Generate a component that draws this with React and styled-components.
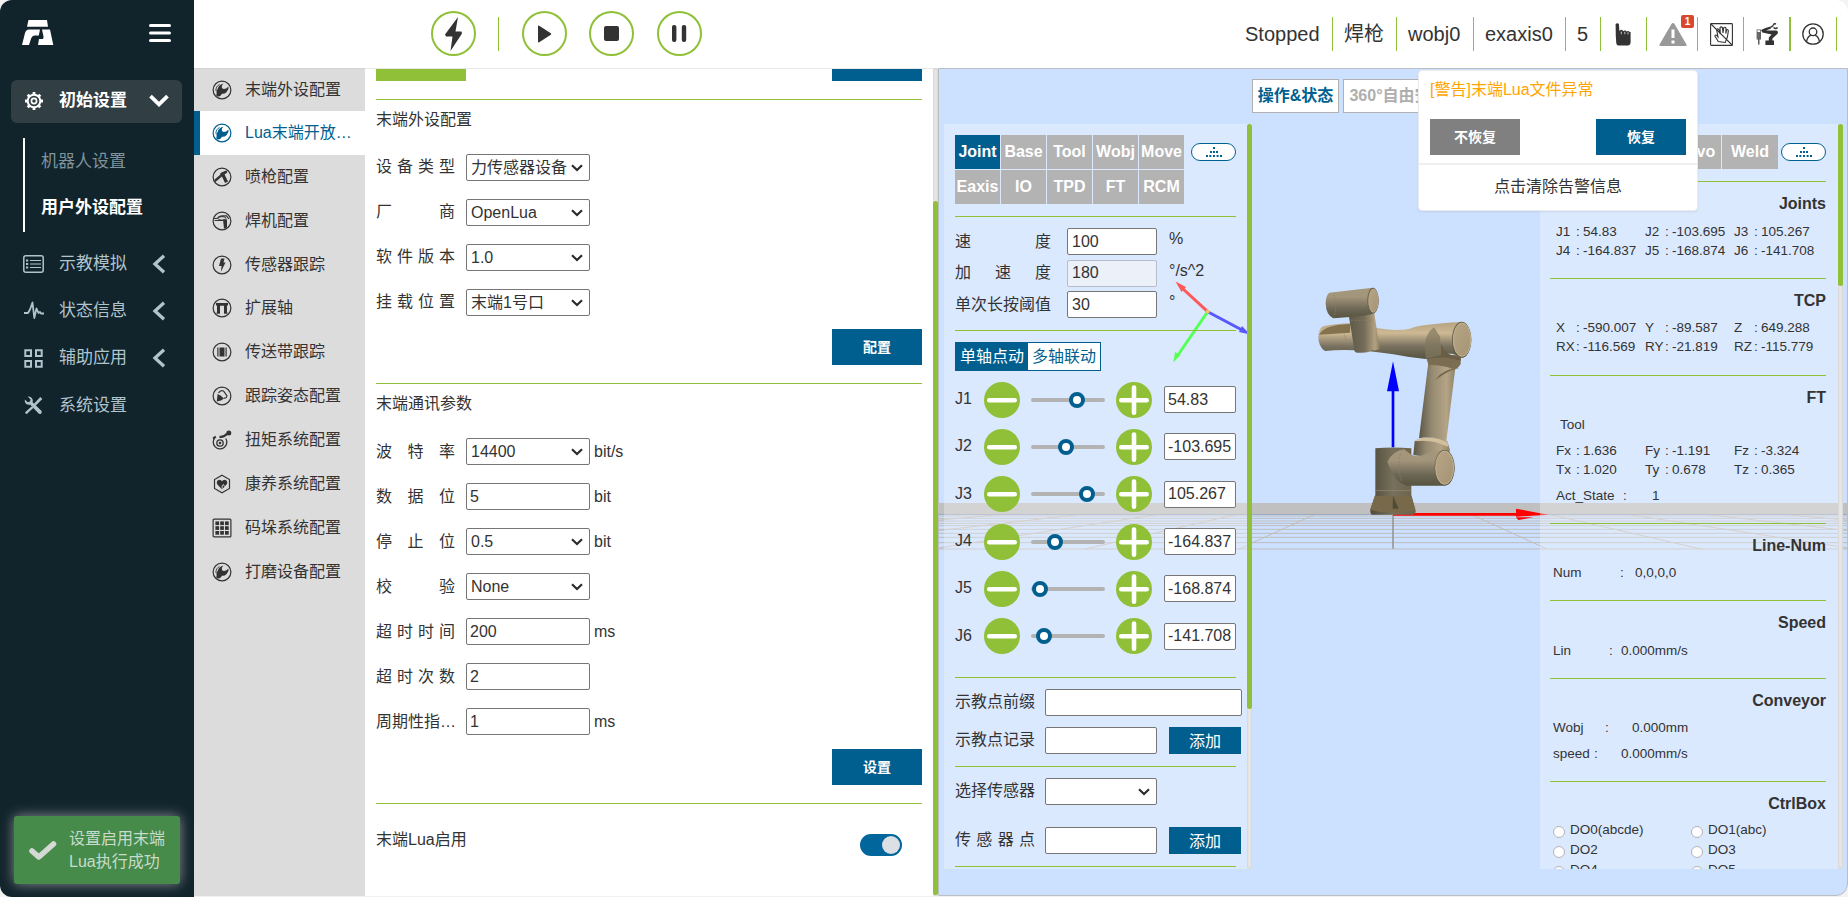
import React from 'react';
import styled, { createGlobalStyle, css } from 'styled-components';

const GREEN = '#8fc037';
const BLUE = '#005f8f';
const FONT = '"Liberation Sans", "Noto Sans CJK SC", sans-serif';

const Global = createGlobalStyle`
  *, *::before, *::after { box-sizing: border-box; }
  html, body { margin: 0; padding: 0; background: #f3f3f4; overflow: hidden; }
  body { font-family: ${FONT}; font-size: 16px; line-height: 24px; color: #333; }
  button, input, select { font-family: inherit; font-size: inherit; color: inherit; margin: 0; }
`;

const Shell = styled.div`
  display: flex;
  width: 1848px;
  height: 897px;
  background: #f0f0f2;
  border-radius: 12px;
  overflow: hidden;
`;

/* ---------- sidebar ---------- */
const Sidebar = styled.aside`
  position: relative;
  width: 194px;
  flex: none;
  background: #11232b;
  color: #b0c4cd;
`;
const Brand = styled.div`
  display: flex;
  justify-content: space-between;
  align-items: center;
  height: 80px;
  padding: 0 23px 14px 22px;
  svg { display: block; }
`;
const NavItem = styled.div`
  display: flex;
  align-items: center;
  height: ${(p) => (p.$active ? 43 : 47.3)}px;
  margin: 0 12px 0 11px;
  padding: 0 12px ${(p) => (p.$active ? 2 : 0)}px 12px;
  border-radius: 6px;
  font-size: 17px;
  ${(p) => p.$active && css`background: #313f45; color: #fff; font-weight: 700;`}
  svg { flex: none; display: block; }
`;
const NavIcon = styled.span`
  display: flex;
  width: 21px;
  justify-content: center;
  margin-right: 15px;
`;
const NavText = styled.span`flex: 1; white-space: nowrap;`;
const NavArrow = styled.span`width: 22px; display: flex; justify-content: center;`;
const SubNav = styled.div`
  margin: 15px 0 8px 23px;
  border-left: 2px solid #fff;
  height: 94px;
  padding: 1px 0 0 16px;
  font-size: 17px;
`;
const SubItem = styled.div`
  height: 46px;
  line-height: 46px;
  color: ${(p) => (p.$active ? '#fff' : '#7f939c')};
  font-weight: ${(p) => (p.$active ? 700 : 400)};
`;
const Toast = styled.div`
  position: absolute;
  left: 14px;
  bottom: 13px;
  width: 166px;
  height: 68px;
  border-radius: 3px;
  background: #468b4a;
  box-shadow: 0 0 13px #8b8f93;
  display: flex;
  align-items: center;
  color: #c9dbca;
  line-height: 23px;
  padding: 0 0 1px 14px;
  gap: 12px;
`;

/* ---------- frame ---------- */
const Body = styled.div`display: flex; flex-direction: column; flex: 1; min-width: 0;`;
const Header = styled.header`
  display: flex;
  justify-content: space-between;
  height: 68px;
  flex: none;
  background: #fff;
`;
const Controls = styled.div`display: flex; align-items: center; padding: 0 0 11px 237px; margin-top: 11px; height: 56px;`;
const RoundButton = styled.button`
  width: 45px;
  height: 45px;
  border-radius: 50%;
  border: 2px solid ${GREEN};
  background: #fff;
  padding: 0;
  display: flex;
  align-items: center;
  justify-content: center;
  margin-right: ${(p) => p.$gap || 0}px;
`;
const Split = styled.i`width: 1px; height: 34px; background: ${GREEN}; margin-right: 23px;`;
const Status = styled.div`display: flex; margin: 17px 11px 0 0; height: 34px; font-size: 20px; line-height: 34px;`;
const StatusItem = styled.div`
  position: relative;
  display: flex;
  align-items: center;
  padding-left: ${(p) => p.$pl || 12}px;
  white-space: nowrap;
  border-right: ${(p) => p.$bar || 1}px solid ${GREEN};
  width: ${(p) => p.$w}px;
  flex: none;
  svg { flex: none; }
`;
const Badge = styled.span`
  position: absolute;
  right: 3px;
  top: -2px;
  width: 13px;
  height: 13px;
  border-radius: 2px;
  background: #d9472f;
  color: #fff;
  font-size: 10px;
  font-weight: 700;
  line-height: 13px;
  text-align: center;
`;
const Main = styled.div`display: flex; flex: 1; min-height: 0; padding-bottom: 1px;`;

/* ---------- peripheral list ---------- */
const List = styled.nav`width: 171px; background: #dcdcdc; border-top: 1px solid #d2d2d2; flex: none;`;
const ListItem = styled.div`
  display: flex;
  align-items: center;
  height: 43.87px;
  &:first-child { height: 42px; }
  padding-left: ${(p) => (p.$active ? 12 : 18)}px;
  gap: 13px;
  white-space: nowrap;
  color: ${(p) => (p.$active ? BLUE : '#333')};
  background: ${(p) => (p.$active ? '#fff' : 'none')};
  border-left: ${(p) => (p.$active ? 6 : 0)}px solid ${BLUE};
  svg { display: block; flex: none; width: 20px; height: 20px; }
`;

/* ---------- configuration form ---------- */
const Form = styled.section`
  width: 568px;
  flex: none;
  padding: 0 11px;
  background: #fff;
  border-top: 1px solid #e8e8e8;
  overflow: hidden;
`;
const CutButtons = styled.div`display: flex; justify-content: space-between; height: 12px; margin-bottom: 18px;`;
const CutButton = styled.i`width: 90px; background: ${(p) => (p.$green ? GREEN : BLUE)};`;
const Rule = styled.div`
  height: 1px;
  background: ${GREEN};
  margin: ${(p) => p.$mt || 0}px 0 ${(p) => p.$mb || 0}px;
`;
const Title = styled.div`height: 24px; line-height: 24px; margin-bottom: ${(p) => p.$mb}px;`;
const Field = styled.div`
  display: flex;
  align-items: center;
  height: 27px;
  margin-bottom: ${(p) => p.$mb}px;
`;
const Label = styled.label`
  width: ${(p) => p.$w}px;
  margin-right: ${(p) => p.$mr}px;
  height: 24px;
  margin-top: ${(p) => (p.$up ? -2 : 0)}px;
  text-align: justify;
  text-align-last: ${(p) => (p.$plain ? 'left' : 'justify')};
  white-space: ${(p) => (p.$plain ? 'nowrap' : 'normal')};
  flex: none;
`;
const Box = styled.input`
  width: ${(p) => p.$w}px;
  height: 27px;
  border: 1px solid #767676;
  border-radius: 2px;
  background: #fff;
  padding: 0 ${(p) => p.$pad || 3}px;
  flex: none;
  outline: none;
  &:disabled { background: #ecf1f9; border-color: #b5bdca; }
`;
const SelectWrap = styled.span`
  position: relative;
  display: block;
  width: ${(p) => p.$w}px;
  height: 27px;
  flex: none;
  svg { position: absolute; right: 6px; top: 9px; }
`;
const SelectBox = styled.select`
  appearance: none;
  width: 100%;
  height: 27px;
  border: 1px solid #767676;
  border-radius: 2px;
  background: #fff;
  padding: 0 0 0 4px;
  outline: none;
`;
const Unit = styled.span`margin-left: ${(p) => p.$ml || 4}px; margin-top: ${(p) => p.$shift || 0}px; white-space: nowrap;`;
const Actions = styled.div`display: flex; justify-content: flex-end; height: 36px;`;
const ActionButton = styled.button`
  width: 90px;
  height: 36px;
  border: 0;
  color: #fff;
  font-size: 14px;
  font-weight: 700;
  padding: 0 0 2px;
  background: ${(p) => (p.$muted ? '#808080' : BLUE)};
`;
const SwitchRow = styled.div`display: flex; justify-content: space-between; padding-right: 20px;`;
const Switch = styled.span`
  width: 42px;
  height: 22px;
  border-radius: 11px;
  background: #00669c;
  display: flex;
  justify-content: flex-end;
  padding: 2px;
  margin-top: 6px;
  i { width: 18px; height: 18px; border-radius: 50%; background: #dcdfe4; }
`;
const ScrollTrack = styled.div`
  width: 5px;
  flex: none;
  background: #e6e6e6;
  box-shadow: inset 0 0 2px #bbb;
  border-radius: 3px;
  padding-top: ${(p) => p.$offset || 0}px;
`;
const ScrollThumb = styled.div`height: ${(p) => p.$h}px; border-radius: 3px; background: ${GREEN};`;

/* ---------- 3D stage ---------- */
const Stage = styled.section`
  position: relative;
  flex: 1;
  min-width: 0;
  background: #cce0ff;
  border: 1px solid #bbbdc2;
  border-radius: 0 0 12px 0;
`;
const SceneSvg = styled.svg`position: absolute; left: -1px; top: -1px; width: 909px; height: 827px;`;
const StageLayer = styled.div`position: relative; height: 100%; padding: 10px 4px 0 5px;`;
const ViewTabs = styled.div`display: flex; gap: 4px; padding-left: 308px; height: 34px; margin-bottom: 11px;`;
const ViewTab = styled.div`
  width: ${(p) => p.$w}px;
  height: 34px;
  line-height: 32px;
  text-align: center;
  border: 1px solid #b1b1b1;
  background: #fff;
  color: ${(p) => (p.$active ? BLUE : '#aeaeae')};
  font-weight: 700;
  white-space: nowrap;
`;
const Panels = styled.div`display: flex; justify-content: space-between; height: 745px;`;
const Panel = styled.div`display: flex; width: ${(p) => p.$w}px; background: rgba(255, 255, 255, 0.3);`;
const PanelBody = styled.div`flex: 1; min-width: 0; overflow: hidden; padding: 11px 11px 0 11px;`;
const TabRow = styled.div`display: flex; justify-content: ${(p) => (p.$end ? 'flex-end' : 'flex-start')}; font-size: 16px;`;
const Tabs = styled.div`
  display: grid;
  grid-template-columns: repeat(${(p) => p.$cols}, ${(p) => p.$w}px);
  gap: 1px;
`;
const Tab = styled.div`
  height: 34px;
  line-height: 34px;
  text-align: center;
  font-weight: 700;
  color: #fff;
  background: ${(p) => (p.$active ? BLUE : '#b3b3b3')};
`;
const Pill = styled.div`
  width: 45px;
  height: 18px;
  border: 1.5px solid #006293;
  border-radius: 9px;
  background: #fff;
  margin: 8px 0 0 ${(p) => p.$ml}px;
  display: flex;
  justify-content: center;
  align-items: center;
`;
const JogGroup = styled.div`width: 281px;`;
const Segments = styled.div`
  display: flex;
  width: 146px;
  height: 29px;
  border: 1px solid ${BLUE};
  background: #fff;
`;
const Segment = styled.span`
  width: 72px;
  line-height: 27px;
  text-align: center;
  white-space: nowrap;
  color: ${(p) => (p.$active ? '#fff' : BLUE)};
  background: ${(p) => (p.$active ? BLUE : 'transparent')};
`;
const JointRows = styled.div`margin-top: 5px;`;
const JointRow = styled.div`display: flex; align-items: center; height: 47.3px;`;
const JointName = styled.span`width: 29px; margin-top: -1px;`;
const Slider = styled.div`
  width: 74px;
  height: 4px;
  border-radius: 2px;
  background: #b3b3b3;
  margin: 0 11px;
  display: flex;
  align-items: center;
`;
const SliderKnob = styled.i`
  width: 16px;
  height: 16px;
  flex: none;
  border-radius: 50%;
  border: 4px solid ${BLUE};
  background: #fff;
`;
const JointValue = styled(Box)`margin-left: 12px;`;
const AddButton = styled.button`
  width: 72px;
  height: 27px;
  flex: none;
  margin-left: 12px;
  border: 0;
  padding: 0;
  background: ${BLUE};
  color: #fff;
`;

/* ---------- status panel ---------- */
const Heading = styled.div`
  text-align: right;
  font-size: 16px;
  font-weight: 700;
  height: 24px;
  line-height: 24px;
  margin-bottom: ${(p) => p.$mb}px;
`;
const StatusBody = styled(PanelBody)`font-size: 13.5px; line-height: 19px; padding: 11px 12px 0 10px; > * { width: 276px; }`;
const DataGrid = styled.div`
  display: grid;
  grid-template-columns: repeat(3, 89px);
  padding-left: 6px;
  line-height: 19px;
  height: 38px;
`;
const Datum = styled.span`
  display: flex;
  white-space: nowrap;
  b { font-weight: 400; width: 20px; }
  i { font-style: normal; width: 7px; }
`;
const Line = styled.div`
  display: flex;
  height: 19px;
  padding-left: ${(p) => p.$pl}px;
  margin: ${(p) => p.$mt || 0}px 0 ${(p) => p.$mb || 0}px;
  white-space: pre;
`;
const Cell = styled.span`width: ${(p) => p.$w}px;`;
const Outputs = styled.div`display: grid; grid-template-columns: 138px 138px; padding-left: 3px; line-height: 20px;`;
const Output = styled.div`
  display: flex;
  gap: 5px;
  height: 20px;
  i { width: 12px; height: 12px; border-radius: 50%; background: #fff; border: 1px solid #b4b4b4; margin-top: 6px; }
`;

/* ---------- alarm popup ---------- */
const Popup = styled.div`
  position: absolute;
  left: 479px;
  top: 1px;
  width: 280px;
  height: 141px;
  background: #fff;
  border: 1px solid #ececec;
  border-radius: 4px;
  box-shadow: 0 1px 2px rgba(0, 0, 0, 0.08);
`;
const PopupText = styled.div`padding: 7px 11px 0; color: #ffa500; height: 48px;`;
const PopupButtons = styled.div`display: flex; justify-content: space-between; padding: 0 11px 8px; border-bottom: 2px solid #efefef;`;
const PopupFoot = styled.div`text-align: center; padding-top: 10px;`;

/* ---------- drawings ---------- */
const Chevron = () => (
  <svg width="14" height="10" viewBox="0 0 14 10"><path d="M2 2.2 L7 7 L12 2.2" fill="none" stroke="#2b2b2b" strokeWidth="2.2" /></svg>
);
const Dots = () => (
  <svg width="18" height="11" viewBox="0 0 18 11" fill="#006293">
    {[[8, 0], [5, 4], [8, 4], [11, 4], [1, 8], [4.3, 8], [8, 8], [11.6, 8], [15, 8]].map(([x, y]) => <rect key={x + '-' + y} x={x} y={y} width="2" height="2" />)}
  </svg>
);
const Logo = () => (
  <svg width="32" height="26" viewBox="0 0 32 26" fill="#fff">
    <path d="M6.5 0 H25 L26 6.8 H5 Z" />
    <path d="M7 9.5 H18 L16.8 15.5 H12.5 Q10.2 15.5 9.3 18 L7 25 H0 L3 13 Q4 9.5 7 9.5 Z" />
    <path d="M20 9.5 H28 L31.3 25 H16 L17 19 H20.8 Q22 18 21.4 16 Z" />
  </svg>
);
const Burger = () => (
  <svg width="22" height="18" viewBox="0 0 22 18" stroke="#fff" strokeWidth="3" strokeLinecap="round"><path d="M1.5 1.5H20.5M1.5 9H20.5M1.5 16.5H20.5" /></svg>
);
const ArrowDown = () => (
  <svg width="20" height="13" viewBox="0 0 20 13"><path d="M1.5 2.2 L10 10.4 L18.5 2.2" fill="none" stroke="#fff" strokeWidth="3.8" /></svg>
);
const ArrowLeft = () => (
  <svg width="14" height="20" viewBox="0 0 14 20"><path d="M12 1.8 L3 10 L12 18.2" fill="none" stroke="#b0c4cd" strokeWidth="3.3" /></svg>
);
const Gear = () => (
  <svg width="18" height="18" viewBox="0 0 18 18" fill="none" stroke="#fff">
    <circle cx="9" cy="9" r="6.3" strokeWidth="2" /><circle cx="9" cy="9" r="2.6" strokeWidth="1.7" />
    <path d="M9 0V2.5M9 15.5V18M0 9H2.5M15.5 9H18M2.7 2.7L4.3 4.3M13.7 13.7L15.3 15.3M2.7 15.3L4.3 13.7M13.7 4.3L15.3 2.7" strokeWidth="2.8" />
  </svg>
);
const Board = () => (
  <svg width="21" height="18" viewBox="0 0 21 18" fill="none" stroke="#b0c4cd">
    <rect x=".8" y=".8" width="19.4" height="16.4" rx="2" strokeWidth="1.5" /><path d="M7 5.5H18M7 9H18M7 12.5H18" strokeWidth="1" /><path d="M3 5.5H5.2M3 9H5.2M3 12.5H5.2" strokeWidth="1.8" />
  </svg>
);
const Pulse = () => (
  <svg width="22" height="19" viewBox="0 0 22 19"><path d="M1 12H5L7 8.5L9.5 1.5L11.3 17L13.5 7.5L15.5 12L17 11L18 12.5H21" fill="none" stroke="#b0c4cd" strokeWidth="1.8" strokeLinejoin="round" /></svg>
);
const Apps = () => (
  <svg width="19" height="19" viewBox="0 0 19 19" fill="none" stroke="#b0c4cd" strokeWidth="2"><path d="M1.3 1.3H7V7H1.3ZM12 1.3H17.7V7H12ZM1.3 12H7V17.7H1.3ZM12 12H17.7V17.7H12Z" /></svg>
);
const Tools = () => (
  <svg width="19" height="19" viewBox="0 0 19 19" fill="#b0c4cd">
    <path d="M3.6 .6L6.6 3.4L6 5.6L3.8 6.2L.8 3.4Q.3 7.4 3.6 8.6Q5.2 9 6 8.6L14.6 17.6Q15.9 18.6 17.2 17.4Q18.4 16 17.4 14.8L8.6 6.2Q9.2 4.4 8.2 2.6Q6.4 0 3.6 .6Z" />
    <path d="M9.8 8L16.2 1L18.4 3L11.8 9.6ZM8 10.6L1.6 16.6L2.6 17.8L9.2 12Z" />
    <path d="M7.6 10.4L1.2 16.2Q1 17.8 2.8 18L9 11.8Z" />
  </svg>
);
const Ring = ({ children }) => (
  <svg viewBox="0 0 20 20" fill="none" stroke="currentColor" strokeWidth="1.2"><circle cx="10" cy="10" r="8.9" />{children}</svg>
);
const F = { fill: 'currentColor', stroke: 'none' };
const icons = {
  grip: <Ring><path {...F} d="M11.5 3.5Q8.8 6.2 10.4 8.6Q13 10 16.5 6.5Q17.2 9.5 14.6 12Q12.6 14.2 10 13.8L8.5 15.8Q6 17.5 4.2 15.6L4.6 13.2Q3.6 11.4 5.6 9Q6.8 4.6 11.5 3.5Z" /><path d="M4 11Q3.5 6.5 7.5 4.5" strokeWidth=".9" /></Ring>,
  spray: <Ring><path d="M2.5 13.5Q8 8 15 4M3 14.5L9 9.5" strokeWidth="1.2" /><path {...F} d="M8.5 6L14 3.6L15.4 5.6L12.6 7.6L16 14.6L13 16L10.2 10L8 9.6Z" /></Ring>,
  weld: <Ring><path d="M1.8 7.5H5Q7 4.8 10 4.8H14.5L17 8M2.5 9.5H11" /><path {...F} d="M11 8.5H15V16.5L12 17.5Z" /><ellipse cx="10" cy="7.4" rx="4" ry="1.8" strokeWidth="1" /></Ring>,
  bolt: <Ring><path {...F} d="M9 3.5H12.5L11.5 7.5H13.5L8.8 17L9.6 11H7Z" /></Ring>,
  axis: <Ring><path {...F} d="M4 5H16V7.5H15V15H12V7.8H8V15H5V7.5H4Z" /><path d="M4.5 15.2H8M12 15.2H15.5" /></Ring>,
  belt: <Ring><path {...F} d="M5.3 5.5H6.5V14.5H5.3ZM7.5 5.5H12.5V14.5H7.5ZM13.5 5.5H14.7V14.5H13.5Z" /></Ring>,
  pose: <Ring><path {...F} d="M4.8 15.5L5.6 8L8.5 9.5L12 12.5L9 14.5Z" /><path d="M6.5 7Q8.5 3.5 11.5 5L15 10Q14.5 12.5 12 12" /></Ring>,
  torque: <svg viewBox="0 0 20 20" fill="none" stroke="currentColor" strokeWidth="1.3"><path d="M13.8 8.5A6.8 6.8 0 1 1 3 7.5" /><circle cx="8" cy="13" r="3.2" /><circle cx="8" cy="13" r="1.3" {...F} /><path d="M7.5 6.8Q12 7.5 15 3.6" strokeWidth="2.2" /><circle cx="16.8" cy="3" r="2.5" {...F} /><path d="M1 8.5L3.8 6.5" strokeWidth="2" /></svg>,
  care: <svg viewBox="0 0 20 20" fill="none" stroke="currentColor" strokeWidth="1.2"><path d="M10 1.2L17.5 5.5V14.5L10 18.8L2.5 14.5V5.5Z" /><path {...F} d="M10 15.5L5 10Q4 6 7.5 5.7Q9.2 5.7 10 7.3Q10.8 5.7 12.5 5.7Q16 6 15 10Z" /><path d="M10.2 15V11.5L11.5 10.5L12.5 12.5" stroke="#dcdcdc" strokeWidth=".9" /></svg>,
  pallet: <svg viewBox="0 0 20 20" fill="none" stroke="currentColor" strokeWidth="1.2"><rect x="1.1" y="1.1" width="17.8" height="17.8" rx="1" />{[0, 1, 2].map((r) => [0, 1, 2].map((c) => <rect key={r + '' + c} {...F} x={3.4 + c * 4.8} y={3.4 + r * 4.8} width="3.7" height="3.7" />))}</svg>,
};
const HandIcon = () => (
  <svg width="20" height="23" viewBox="0 0 20 23" fill="#333">
    <path d="M2.6 1Q4.2 -.4 5.9 1L6.4 8L7.2 7.2Q8.6 6.4 9.8 7.4L10.2 8.2Q11.4 6.8 13 7.8L13.4 8.6Q14.8 7.4 16.4 8.6V9L17.6 9V19Q17.6 22.4 14.6 22.6H6.6Q3.4 22.6 3.2 19.4L2.8 13Z" />
    <path d="M8.3 8.6V11.2M11.8 8.8V11.2M15 9.2V11.4" stroke="#fff" strokeWidth=".7" />
  </svg>
);
const WarnIcon = () => (
  <svg width="28" height="23" viewBox="0 0 28 23"><path d="M14 0Q15 0 15.5 1L27.5 21.5Q28 23 26.5 23H1.5Q0 23 .5 21.5L12.5 1Q13 0 14 0Z" fill="#999" /><path d="M14 6.5V15M14 17.5V20.5" stroke="#fff" strokeWidth="3" /></svg>
);
const NoTouchIcon = () => (
  <svg width="23" height="23" viewBox="0 0 23 23" fill="none" stroke="#333" strokeWidth="1.1">
    <rect x=".6" y=".6" width="21.8" height="21.8" rx=".8" />
    <path d="M.6 .6L22.4 22.4" strokeWidth="1.3" />
    <path d="M8.3 18.5L5 13.2Q4.6 11.6 6.4 12.2L8 14L6.6 6.6Q7.6 5 8.8 6.6L10.3 11L10 4.6Q11.2 3.2 12.4 4.6L13 10L13.8 4.6Q15 3.6 16 5L15.8 10.6L16.6 7Q17.8 6 18.4 7.6L17.4 14L15.2 19.5Z" />
  </svg>
);
const ArmIcon = () => (
  <svg width="23" height="23" viewBox="0 0 23 23" fill="#333">
    <path d="M.6 6.4H5V16.4H.6ZM1.4 7.2V9H4.2V7.2Z" fillRule="evenodd" opacity=".75" /><rect x="2.2" y="16" width="1.2" height="5.6" />
    <path d="M5 7L9.5 5L14.5 3.6L15 5.6L10 7.4H20.6Q22.6 8.4 21.8 10.4L16.4 15.6V17.4H18V22H9.4V17.4H12.8V14.4L15.6 11.4L6.4 9.6Z" />
    <path d="M14.5 4.5L17.5 2.4M17.2 1.8Q18.4 .4 20 1M17.6 4.4Q19.6 6.4 21.6 4.4" fill="none" stroke="#333" strokeWidth="1.4" />
  </svg>
);
const UserIcon = () => (
  <svg width="22" height="22" viewBox="0 0 22 22" fill="none" stroke="#333" strokeWidth="1.3"><circle cx="11" cy="11" r="10.2" /><circle cx="11" cy="8.8" r="3.8" /><path d="M4.6 18.4Q5.4 13.4 8.8 12.3M17.4 18.4Q16.6 13.4 13.2 12.3" /></svg>
);

const Minus = () => (
  <svg width="36" height="36" viewBox="0 0 36 36"><circle cx="18" cy="18" r="18" fill={GREEN} /><path d="M5.3 18.3H30.7" stroke="#fff" strokeWidth="4.6" strokeLinecap="round" /></svg>
);
const Plus = () => (
  <svg width="36" height="36" viewBox="0 0 36 36"><circle cx="18" cy="18" r="18" fill={GREEN} /><path d="M5.3 18.3H30.7M18 5.5V30.8" stroke="#fff" strokeWidth="4.6" strokeLinecap="round" /></svg>
);

const gridRows = [823, 828, 835, 843, 850, 857, 868, 880, 892, 908, 927];
const Scene = () => (
  <SceneSvg viewBox="938 68 909 827">
    <defs>
      <linearGradient id="tube" x1="0" y1="0" x2="0" y2="1"><stop offset="0" stopColor="#a5977a" /><stop offset=".3" stopColor="#a3957b" /><stop offset=".7" stopColor="#6d6755" /><stop offset="1" stopColor="#57543f" /></linearGradient>
      <linearGradient id="fore" x1="0" y1="0" x2="0" y2="1"><stop offset="0" stopColor="#b5a27f" /><stop offset=".3" stopColor="#cdb994" /><stop offset=".65" stopColor="#7a7260" /><stop offset="1" stopColor="#55523f" /></linearGradient>
      <linearGradient id="upright" x1="0" y1="0" x2="1" y2="0"><stop offset="0" stopColor="#5b5646" /><stop offset=".35" stopColor="#958a71" /><stop offset=".75" stopColor="#b5a486" /><stop offset="1" stopColor="#8f8266" /></linearGradient>
      <linearGradient id="column" x1="0" y1="0" x2="1" y2="0"><stop offset="0" stopColor="#4f4b3b" /><stop offset=".5" stopColor="#77705c" /><stop offset="1" stopColor="#6c624a" /></linearGradient>
      <linearGradient id="wrist" x1="0" y1="0" x2="1" y2="0"><stop offset="0" stopColor="#5e5948" /><stop offset=".5" stopColor="#746c59" /><stop offset=".85" stopColor="#b3a180" /><stop offset="1" stopColor="#8d8065" /></linearGradient>
      <linearGradient id="cap" x1="0" y1="0" x2="1" y2="1"><stop offset="0" stopColor="#b8a686" /><stop offset="1" stopColor="#a39374" /></linearGradient>
    </defs>
    <rect x="938" y="503" width="910" height="11" fill="#c0c0c0" />
    <g stroke="#bdbcbc" strokeWidth="1">
      {gridRows.map((y) => <path key={y} d={`M938 ${240 + y / 3}H1848`} />)}
      {[-6, -5, -4, -3, -2, -1, 1, 2, 3, 4, 5, 6].map((k) => <path key={k} stroke="#c4bdb6" d={`M${1393 + 77.3 * k} 514L${1393 + 154 * k} 549`} />)}
    </g>
    <path d="M938 514.5H1848" stroke="#9eabbc" />
    <g strokeWidth="3">
      <path d="M1207.7 311.7L1182 288" stroke="#ff1010" /><path d="M1175.5 281.5L1186 287L1181.5 292Z" fill="#ff1010" />
      <path d="M1207.7 311.7L1242 330" stroke="#1010ff" /><path d="M1250 334.5L1239 332L1242 326Z" fill="#1010ff" />
      <path d="M1207.7 311.7L1178 355" stroke="#10ff10" /><path d="M1173.3 362.5L1175 352L1180.5 355Z" fill="#10ff10" />
      <circle cx="1207.7" cy="311.5" r="2" fill="#f5a030" />
    </g>
    <g transform="translate(1250 240) scale(.33333)">
      <path d="M429 826V926" stroke="#999" strokeWidth="5" />
      <path d="M429 823H800" stroke="#f00" strokeWidth="8" /><path d="M798 806L895 824L798 830ZM798 832L850 832L805 840Z" fill="#f00" />
      <path d="M429 622V450" stroke="#00f" strokeWidth="8" /><path d="M429 364L447 454H411Z" fill="#00f" />
      <path d="M376 625Q429 620 484 625V765L497 812Q498 822 490 824H365Q360 822 361 808L376 765Z" fill="url(#column)" />
      <path d="M374 768H484L496 810Q430 828 361 810Z" fill="#78694a" /><path d="M429 767L446 806H428Z" fill="#504a37" />
      <path d="M376 752H484" stroke="#9b8d70" strokeWidth="2" />
      <path d="M490 645L494 604Q540 580 592 604L600 630L590 660Z" fill="url(#upright)" />
      <path d="M497 600Q540 584 592 606Q596 618 592 620Q545 596 497 604Z" fill="#d2c09d" />
      <path d="M412 665Q430 632 462 628L482 643Q505 656 532 640L585 628Q612 640 613 690Q606 736 585 737H472Q435 730 412 665Z" fill="url(#tube)" />
      <ellipse cx="584" cy="683" rx="30" ry="53" fill="#5d5747" /><ellipse cx="584" cy="683" rx="27" ry="50" fill="url(#cap)" stroke="#c7b590" strokeWidth="3" />
      <path d="M535 368L617 376L589 603Q545 585 507 595Z" fill="url(#upright)" />
      <path d="M556 420Q580 385 630 384L616 388Q600 388 556 420Z" fill="#6d6045" />
      <path d="M526 345L632 345V372Q622 390 610 386Q560 372 536 376Z" fill="#7b6d52" />
      <path d="M215 262Q225 254 300 250L385 265Q440 274 480 266Q510 252 635 246Q663 260 664 300Q658 352 636 353Q590 330 575 350L527 357Q480 353 430 343Q310 324 225 333Q205 320 205 290Q206 270 215 262Z" fill="url(#fore)" />
      <path d="M525 312Q528 280 552 262L570 290L574 346L527 357Z" fill="#81785f" opacity=".7" /><path d="M574 310Q580 345 632 353L632 362Q560 345 527 357L574 347Z" fill="#6b5e44" />
      <path d="M207 284Q220 255 300 252V278Z" fill="#84724f" />
      <ellipse cx="635" cy="299" rx="29" ry="54" fill="#665e4b" /><ellipse cx="636" cy="299" rx="26" ry="50" fill="url(#cap)" stroke="#c7b590" strokeWidth="3" />
      <path d="M296 225L372 215L389 325Q386 332 365 331Q360 340 320 338Q312 336 313 328Z" fill="url(#wrist)" />
      <path d="M238 158L368 143Q386 155 386 185Q382 220 365 222Q345 228 300 231L250 235Q228 225 227 190Q228 165 238 158Z" fill="url(#tube)" />
      <ellipse cx="369" cy="182" rx="17" ry="39" fill="#665e4b" /><ellipse cx="370" cy="182" rx="14" ry="35" fill="url(#cap)" stroke="#c7b590" strokeWidth="2" />
      <path d="M302 241H366M281 275L294 320M452 640Q440 680 455 725M250 165Q264 190 252 232" fill="none" stroke="#8c7f64" strokeWidth="2" strokeDasharray="7 4" />
    </g>
  </SceneSvg>
);

/* ---------- data ---------- */
const nav = [['示教模拟', Board, true], ['状态信息', Pulse, true], ['辅助应用', Apps, true], ['系统设置', Tools, false]];
const list = [
  ['末端外设配置', 'grip'], ['Lua末端开放…', 'grip'], ['喷枪配置', 'spray'], ['焊机配置', 'weld'], ['传感器跟踪', 'bolt'], ['扩展轴', 'axis'],
  ['传送带跟踪', 'belt'], ['跟踪姿态配置', 'pose'], ['扭矩系统配置', 'torque'], ['康养系统配置', 'care'], ['码垛系统配置', 'pallet'], ['打磨设备配置', 'grip'],
];
const device = [['设备类型', '力传感器设备'], ['厂商', 'OpenLua'], ['软件版本', '1.0'], ['挂载位置', '末端1号口']];
const comm = [
  ['波特率', '14400', 'bit/s', 's'], ['数据位', '5', 'bit'], ['停止位', '0.5', 'bit', 's'], ['校验', 'None', '', 's'],
  ['超时时间', '200', 'ms'], ['超时次数', '2', ''], ['周期性指…', '1', 'ms'],
];
const motion = [['速度', '100', '%'], ['加速度', '180', '°/s^2'], ['单次长按阈值', '30', '°']];
const joints = [['J1', '54.83', 46], ['J2', '-103.695', 35], ['J3', '105.267', 55.7], ['J4', '-164.837', 24.3], ['J5', '-168.874', 9], ['J6', '-141.708', 13]];

const Select = ({ w, value }) => (
  <SelectWrap $w={w}><SelectBox defaultValue={value}><option>{value}</option></SelectBox><Chevron /></SelectWrap>
);
const Data = ({ items }) => items.map(([k, v]) => <Datum key={k}><b>{k}</b><i>:</i>{v}</Datum>);

export default function App() {
  return (
    <>
      <Global />
      <Shell>
        <Sidebar>
          <Brand><Logo /><Burger /></Brand>
          <NavItem $active><NavIcon><Gear /></NavIcon><NavText>初始设置</NavText><NavArrow><ArrowDown /></NavArrow></NavItem>
          <SubNav><SubItem>机器人设置</SubItem><SubItem $active>用户外设配置</SubItem></SubNav>
          {nav.map(([t, Icon, more]) => (
            <NavItem key={t}><NavIcon><Icon /></NavIcon><NavText>{t}</NavText>{more && <NavArrow><ArrowLeft /></NavArrow>}</NavItem>
          ))}
          <Toast>
            <svg width="29" height="22" viewBox="0 0 29 22"><path d="M4 12L10.8 18L25.5 5" fill="none" stroke="#d5d9d6" strokeWidth="5.6" strokeLinecap="round" strokeLinejoin="round" /></svg>
            <div>设置启用末端<br />Lua执行成功</div>
          </Toast>
        </Sidebar>
        <Body>
          <Header>
            <Controls>
              <RoundButton $gap={22}><svg width="18" height="34" viewBox="0 0 18 34"><path d="M13 0L0 17.5L1 19.5H7.5L5.5 34L17 16.5L16.5 14.5H10.5Z" fill="#333" /></svg></RoundButton>
              <Split />
              <RoundButton $gap={22}><svg width="15" height="18" viewBox="0 0 15 18"><path d="M1.5 0.5Q1 0.5 1 1.5V16.5Q1 17.8 2.2 17.2L13.8 9.8Q14.8 9 13.8 8.2L2.2 0.8Z" fill="#333" /></svg></RoundButton>
              <RoundButton $gap={23}><svg width="15" height="15"><rect width="15" height="15" rx="2" fill="#333" /></svg></RoundButton>
              <RoundButton><svg width="15" height="17"><rect width="4.4" height="17" rx="2" fill="#333" /><rect x="9.8" width="4.4" height="17" rx="2" fill="#333" /></svg></RoundButton>
            </Controls>
            <Status>
              <StatusItem $w={100}>Stopped</StatusItem>
              <StatusItem $w={64} $pl={11}>焊枪</StatusItem>
              <StatusItem $w={77} $pl={11}>wobj0</StatusItem>
              <StatusItem $w={92} $pl={11}>exaxis0</StatusItem>
              <StatusItem $w={35} $pl={11}>5</StatusItem>
              <StatusItem $w={46}><HandIcon /></StatusItem>
              <StatusItem $w={51}><WarnIcon /><Badge>1</Badge></StatusItem>
              <StatusItem $w={46}><NoTouchIcon /></StatusItem>
              <StatusItem $w={47} $bar={2}><ArmIcon /></StatusItem>
              <StatusItem $w={46} $pl={11}><UserIcon /></StatusItem>
            </Status>
          </Header>
          <Main>
            <List>
              {list.map(([t, icon], i) => <ListItem key={t} $active={i === 1}>{icons[icon]}{t}</ListItem>)}
            </List>
            <Form>
              <CutButtons><CutButton $green /><CutButton /></CutButtons>
              <Rule $mb={8} />
              <Title $mb={22}>末端外设配置</Title>
              {device.map(([l, v], i) => (
                <Field key={l} $mb={i === 3 ? 13 : 18}><Label $w={79} $mr={11} $up>{l}</Label><Select w={124} value={v} /></Field>
              ))}
              <Actions><ActionButton>配置</ActionButton></Actions>
              <Rule $mt={18} $mb={8} />
              <Title $mb={22}>末端通讯参数</Title>
              {comm.map(([l, v, u, s], i) => (
                <Field key={l} $mb={i === 6 ? 14 : 18}>
                  <Label $w={79} $mr={11} $plain={i === 6}>{l}</Label>
                  {s ? <Select w={124} value={v} /> : <Box $w={124} defaultValue={v} />}
                  <Unit>{u}</Unit>
                </Field>
              ))}
              <Actions><ActionButton>设置</ActionButton></Actions>
              <Rule $mt={18} $mb={24} />
              <SwitchRow>末端Lua启用<Switch><i /></Switch></SwitchRow>
            </Form>
            <ScrollTrack $offset={133}><ScrollThumb $h={694} /></ScrollTrack>
            <Stage>
              <Scene />
              <StageLayer>
                <ViewTabs><ViewTab $w={87} $active>操作&amp;状态</ViewTab><ViewTab $w={110}>360°自由安装</ViewTab></ViewTabs>
                <Panels>
                  <Panel $w={308}>
                    <PanelBody>
                      <TabRow>
                        <Tabs $cols={5} $w={45}>
                          {['Joint', 'Base', 'Tool', 'Wobj', 'Move', 'Eaxis', 'IO', 'TPD', 'FT', 'RCM'].map((t, i) => <Tab key={t} $active={i === 0}>{t}</Tab>)}
                        </Tabs>
                        <Pill $ml={7}><Dots /></Pill>
                      </TabRow>
                      <JogGroup>
                        <Rule $mt={12} $mb={11} />
                        {motion.map(([l, v, u], i) => (
                          <Field key={l} $mb={i === 2 ? 12 : 4.5}>
                            <Label $w={96} $mr={16}>{l}</Label><Box $w={90} $pad={4} defaultValue={v} disabled={i === 1} />
                            <Unit $ml={12} $shift={i === 1 ? -4 : -5}>{u}</Unit>
                          </Field>
                        ))}
                        <Rule $mb={11} />
                        <Segments><Segment $active>单轴点动</Segment><Segment>多轴联动</Segment></Segments>
                      </JogGroup>
                      <JointRows>
                        {joints.map(([n, v, x]) => (
                          <JointRow key={n}>
                            <JointName>{n}</JointName><Minus />
                            <Slider><SliderKnob style={{ marginLeft: x - 8 }} /></Slider>
                            <Plus /><JointValue $w={72} $pad={3} defaultValue={v} />
                          </JointRow>
                        ))}
                      </JointRows>
                      <JogGroup>
                        <Rule $mt={17} $mb={11} />
                        <Field $mb={11}><Label $w={80} $mr={10}>示教点前缀</Label><Box $w={197} /></Field>
                        <Field $mb={12}><Label $w={80} $mr={10}>示教点记录</Label><Box $w={112} /><AddButton>添加</AddButton></Field>
                        <Rule $mb={11} />
                        <Field $mb={22}><Label $w={80} $mr={10}>选择传感器</Label><Select w={112} value="" /></Field>
                        <Field $mb={12}><Label $w={80} $mr={10}>传感器点</Label><Box $w={112} /><AddButton>添加</AddButton></Field>
                        <Rule />
                      </JogGroup>
                    </PanelBody>
                    <ScrollTrack><ScrollThumb $h={585} /></ScrollTrack>
                  </Panel>
                  <Panel $w={303}>
                    <StatusBody>
                      <TabRow $end><Tabs $cols={3} $w={56}><Tab>IO</Tab><Tab>Servo</Tab><Tab>Weld</Tab></Tabs><Pill $ml={3}><Dots /></Pill></TabRow>
                      <Rule $mt={12} $mb={10} />
                      <Heading $mb={6}>Joints</Heading>
                      <DataGrid><Data items={[['J1', '54.83'], ['J2', '-103.695'], ['J3', '105.267'], ['J4', '-164.837'], ['J5', '-168.874'], ['J6', '-141.708']]} /></DataGrid>
                      <Rule $mt={18} $mb={10} />
                      <Heading $mb={5}>TCP</Heading>
                      <DataGrid><Data items={[['X', '-590.007'], ['Y', '-89.587'], ['Z', '649.288'], ['RX', '-116.569'], ['RY', '-21.819'], ['RZ', '-115.779']]} /></DataGrid>
                      <Rule $mt={19} $mb={10} />
                      <Heading $mb={5}>FT</Heading>
                      <Line $pl={10} $mb={7}>Tool</Line>
                      <DataGrid><Data items={[['Fx', '1.636'], ['Fy', '-1.191'], ['Fz', '-3.324'], ['Tx', '1.020'], ['Ty', '0.678'], ['Tz', '0.365']]} /></DataGrid>
                      <Line $pl={6} $mt={7}><Cell $w={67}>Act_State</Cell><Cell $w={29}>:</Cell>1</Line>
                      <Rule $mt={18} $mb={10} />
                      <Heading $mb={5}>Line-Num</Heading>
                      <Line $pl={3}><Cell $w={67}>Num</Cell><Cell $w={15}>:</Cell>0,0,0,0</Line>
                      <Rule $mt={18} $mb={10} />
                      <Heading $mb={6}>Speed</Heading>
                      <Line $pl={3}><Cell $w={56}>Lin</Cell><Cell $w={12}>:</Cell>0.000mm/s</Line>
                      <Rule $mt={18} $mb={10} />
                      <Heading $mb={5}>Conveyor</Heading>
                      <Line $pl={3} $mb={7}><Cell $w={52}>Wobj</Cell><Cell $w={27}>:</Cell>0.000mm</Line>
                      <Line $pl={3}><Cell $w={41}>speed</Cell><Cell $w={27}>:</Cell>0.000mm/s</Line>
                      <Rule $mt={18} $mb={10} />
                      <Heading $mb={4}>CtrlBox</Heading>
                      <Outputs>{['DO0(abcde)', 'DO1(abc)', 'DO2', 'DO3', 'DO4', 'DO5'].map((t) => <Output key={t}><i />{t}</Output>)}</Outputs>
                    </StatusBody>
                    <ScrollTrack><ScrollThumb $h={162} /></ScrollTrack>
                  </Panel>
                </Panels>
              </StageLayer>
              <Popup>
                <PopupText>[警告]末端Lua文件异常</PopupText>
                <PopupButtons><ActionButton $muted>不恢复</ActionButton><ActionButton>恢复</ActionButton></PopupButtons>
                <PopupFoot>点击清除告警信息</PopupFoot>
              </Popup>
            </Stage>
          </Main>
        </Body>
      </Shell>
    </>
  );
}
